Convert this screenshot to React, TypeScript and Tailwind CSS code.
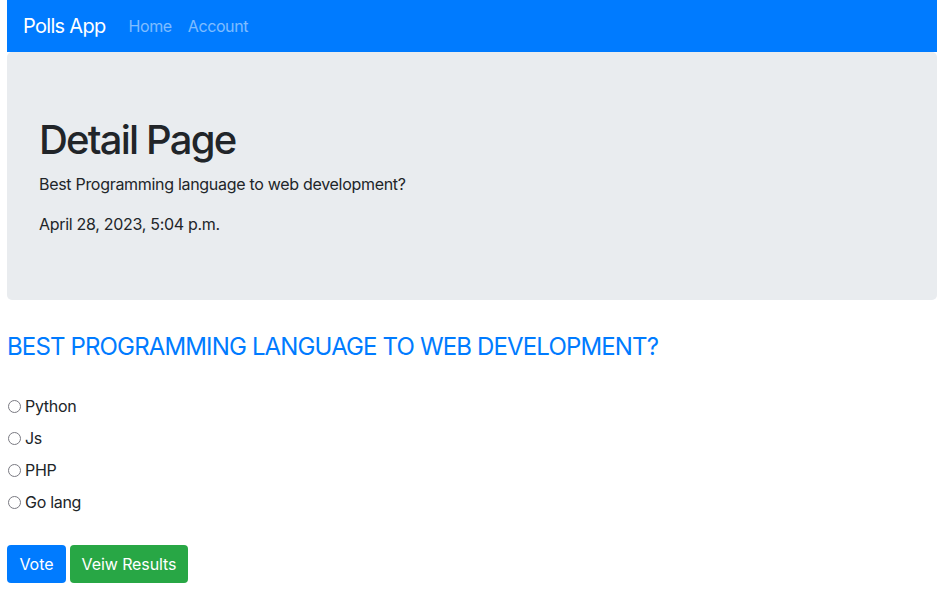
import React from "react";

export default function App() {
  const options = ["Python", "Js", "PHP", "Go lang"];
  return (
    <div className="min-h-[600px] bg-white text-[#212529] font-['Inter',sans-serif]">
      <div className="ml-[7px] w-[930px]">
        <nav className="h-[52px] bg-[#007bff] flex items-center px-4">
          <span className="text-[20px] text-white mr-[23px] leading-[30px] tracking-[-0.7px]">Polls App</span>
          <span className="text-[16px] text-white/50 mr-[16px] tracking-[-0.4px]">Home</span>
          <span className="text-[16px] text-white/50 tracking-[-0.4px]">Account</span>
        </nav>
        <div className="bg-[#e9ecef] rounded-[5px] h-[248px] px-8 pt-16">
          <h1 className="text-[40px] leading-[48px] font-medium mb-2 tracking-[-1.8px]">Detail Page</h1>
          <p className="text-[16px] leading-6 mb-4 tracking-[-0.3px]">Best Programming language to web development?</p>
          <p className="text-[16px] leading-6 tracking-[-0.3px]">April 28, 2023, 5:04 p.m.</p>
        </div>
        <h4 className="mt-[32px] text-[24px] leading-[29px] text-[#007bff] uppercase font-normal tracking-[-0.85px]">
          Best Programming language to web development?
        </h4>
        <div className="mt-[29px] flex flex-col">
          {options.map((o) => (
            <label key={o} className="flex items-center h-[32px] text-[16px] leading-6 tracking-[-0.3px]">
              <span className="ml-[1px] mr-[4px] w-[13px] h-[13px] rounded-full border-[1.5px] border-[#7a7a82] bg-white shrink-0" />
              {o}
            </label>
          ))}
        </div>
        <div className="mt-[27px] flex gap-1">
          <button className="h-[38px] w-[59px] bg-[#007bff] text-white rounded text-[16px]">Vote</button>
          <button className="h-[38px] w-[118px] bg-[#28a745] text-white rounded text-[16px] tracking-[-0.1px]">Veiw Results</button>
        </div>
      </div>
    </div>
  );
}
